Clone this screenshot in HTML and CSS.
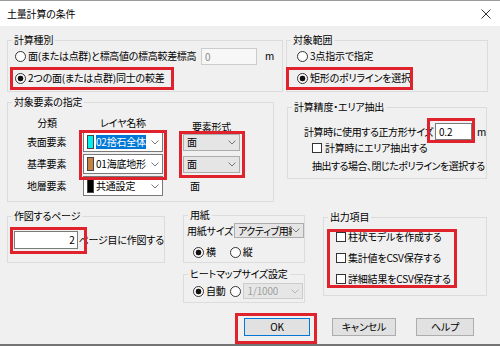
FILE: index.html
```html
<!DOCTYPE html>
<html lang="ja">
<head>
  <meta charset="UTF-8" />
  <title>土量計算の条件</title>
  <link rel="stylesheet" href="styles.css">
</head>
<body>
  <div class="dialog">
    <div class="titlebar">
      <span class="title">土量計算の条件</span>
      <svg class="close" width="10" height="10" viewBox="0 0 10 10"><path d="M0.5 0.5L9.5 9.5M9.5 0.5L0.5 9.5" stroke="#333" stroke-width="1"/></svg>
    </div>

    <div class="content">
      <div class="row row-top">
        <fieldset class="group grp-kind">
          <legend>計算種別</legend>
          <div class="group-body">
            <div class="line">
              <span class="radio"></span>
              <span class="kind-label">面(または点群)と標高値の標高較差標高</span>
              <span class="textbox disabled">0</span>
              <span class="unit">m</span>
            </div>
            <div class="line">
              <span class="radio on"></span>
              <span>2つの面(または点群)同士の較差</span>
            </div>
          </div>
        </fieldset>

        <fieldset class="group grp-range">
          <legend>対象範囲</legend>
          <div class="group-body">
            <div class="line"><span class="radio"></span><span>3点指示で指定</span></div>
            <div class="line"><span class="radio on"></span><span>矩形のポリラインを選択</span></div>
          </div>
        </fieldset>
      </div>

      <div class="row row-mid">
        <fieldset class="group grp-target">
          <legend>対象要素の指定</legend>
          <div class="group-body target-grid">
            <span class="hdr hdr-kind">分類</span>
            <span class="hdr hdr-layer">レイヤ名称</span>
            <span class="hdr hdr-form">要素形式</span>

            <span class="row-label">表面要素</span>
            <span class="combo edit">
              <span class="swatch" style="background:#00f0f0"></span>
              <span class="combo-text selected">02捨石全体</span>
              <svg class="chev" width="8" height="5" viewBox="0 0 8 5"><path d="M0.5 0.5L4 4L7.5 0.5" fill="none" stroke="#777"/></svg>
            </span>
            <span class="combo list">
              <span class="combo-text">面</span>
              <svg class="chev" width="8" height="5" viewBox="0 0 8 5"><path d="M0.5 0.5L4 4L7.5 0.5" fill="none" stroke="#777"/></svg>
            </span>

            <span class="row-label">基準要素</span>
            <span class="combo edit">
              <span class="swatch" style="background:#c8823f"></span>
              <span class="combo-text">01海底地形</span>
              <svg class="chev" width="8" height="5" viewBox="0 0 8 5"><path d="M0.5 0.5L4 4L7.5 0.5" fill="none" stroke="#777"/></svg>
            </span>
            <span class="combo list">
              <span class="combo-text">面</span>
              <svg class="chev" width="8" height="5" viewBox="0 0 8 5"><path d="M0.5 0.5L4 4L7.5 0.5" fill="none" stroke="#777"/></svg>
            </span>

            <span class="row-label">地層要素</span>
            <span class="combo edit">
              <span class="swatch" style="background:#000"></span>
              <span class="combo-text">共通設定</span>
              <svg class="chev" width="8" height="5" viewBox="0 0 8 5"><path d="M0.5 0.5L4 4L7.5 0.5" fill="none" stroke="#777"/></svg>
            </span>
            <span class="form-plain">面</span>
          </div>
        </fieldset>

        <fieldset class="group grp-accuracy">
          <legend>計算精度・エリア抽出</legend>
          <div class="group-body">
            <div class="line">
              <span class="size-label">計算時に使用する正方形サイズ</span>
              <span class="textbox size-box">0.2</span>
              <span class="unit-m">m</span>
            </div>
            <div class="line check-line">
              <span class="check"></span><span>計算時にエリア抽出する</span>
            </div>
            <div class="line note-line">抽出する場合、閉じたポリラインを選択する</div>
          </div>
        </fieldset>
      </div>

      <div class="row row-bottom">
        <fieldset class="group grp-page">
          <legend>作図するページ</legend>
          <div class="group-body line">
            <span class="textbox page-box">2</span>
            <span class="page-text">ページ目に作図する</span>
          </div>
        </fieldset>

        <div class="col-paper">
          <fieldset class="group grp-paper">
            <legend>用紙</legend>
            <div class="group-body">
              <div class="line">
                <span class="paper-label">用紙サイズ</span>
                <span class="combo list paper-combo">
                  <span class="combo-text">アクティブ用紙</span>
                  <svg class="chev" width="8" height="5" viewBox="0 0 8 5"><path d="M0.5 0.5L4 4L7.5 0.5" fill="none" stroke="#777"/></svg>
                </span>
              </div>
              <div class="line orient">
                <span class="radio on"></span><span>横</span>
                <span class="radio gap-radio"></span><span>縦</span>
              </div>
            </div>
          </fieldset>

          <fieldset class="group grp-heat">
            <legend>ヒートマップサイズ設定</legend>
            <div class="group-body line heat-line">
              <span class="radio on"></span><span>自動</span>
              <span class="radio heat-radio"></span>
              <span class="combo disabled-combo">
                <span class="combo-text">1/1000</span>
                <svg class="chev" width="8" height="5" viewBox="0 0 8 5"><path d="M0.5 0.5L4 4L7.5 0.5" fill="none" stroke="#b5b5b5"/></svg>
              </span>
            </div>
          </fieldset>
        </div>

        <fieldset class="group grp-output">
          <legend>出力項目</legend>
          <div class="group-body">
            <div class="line out-line"><span class="check"></span><span>柱状モデルを作成する</span></div>
            <div class="line out-line"><span class="check"></span><span>集計値をCSV保存する</span></div>
            <div class="line out-line"><span class="check"></span><span>詳細結果をCSV保存する</span></div>
          </div>
        </fieldset>
      </div>

      <div class="buttons">
        <span class="btn btn-ok">OK</span>
        <span class="btn btn-cancel">キャンセル</span>
        <span class="btn btn-help">ヘルプ</span>
      </div>
    </div>

    <!-- red highlight frames -->
    <div class="mark mark-kind"></div>
    <div class="mark mark-range"></div>
    <div class="mark mark-layer"></div>
    <div class="mark mark-form"></div>
    <div class="mark mark-size"></div>
    <div class="mark mark-page"></div>
    <div class="mark mark-output"></div>
    <div class="mark mark-ok"></div>
  </div>
</body>
</html>
```

FILE: styles.css
```css
* { box-sizing: border-box; }
body {
  margin: 0;
  font-family: "Noto Sans CJK JP", "Noto Sans", sans-serif;
  font-size: 10px; line-height: 14px;
  letter-spacing: -0.2px;
  font-feature-settings: "palt" 1;
  color: #000; background: #fff;
}
.dialog {
  position: relative;
  width: 500px; height: 346px;
  background: #f0f0f0;
  border-bottom: 2px solid #747474;
  overflow: hidden;
}
.titlebar {
  height: 26px; background: #fff;
  border-top: 1px solid #9a9a9a;
  display: flex; align-items: center; justify-content: space-between;
  padding: 0 9px 0 7px;
}
.content { padding: 8px 0 0 7px; }

/* group boxes */
.group {
  margin: 0; padding: 0; min-width: 0;
  border: 1px solid #dcdcdc;
}
.group legend {
  padding: 0 2px; margin-left: 4px;
  line-height: 12px;
}
.row { display: flex; align-items: flex-start; }
.line { display: flex; align-items: center; white-space: nowrap; }

.radio {
  flex: none; width: 11px; height: 11px;
  border: 1px solid #333; border-radius: 50%;
  background: #fff; margin-right: 2px;
}
.radio.on { background: radial-gradient(circle, #111 0 2.6px, #fff 3.2px); }
.check {
  flex: none; width: 10px; height: 10px;
  border: 1px solid #333; background: #fff;
  margin-right: 3px;
}
.textbox {
  display: block; background: #fff;
  border: 1px solid #7a7a7a;
  padding: 0 3px; line-height: 15px;
}
.textbox.disabled { background: #f7f7f7; border-color: #cccccc; color: #8a8a8a; }

.combo {
  display: flex; align-items: center;
  border: 1px solid #7a7a7a; background: #fff;
  overflow: hidden;
}
.combo .chev { flex: none; margin-left: auto; margin-right: 3px; }
.combo.list { background: #e5e5e5; border-color: #adadad; padding-left: 3px; }
.combo-text { overflow: hidden; white-space: nowrap; }

/* 計算種別 / 対象範囲 */
.row-top .group { height: 58px; }
.grp-kind { width: 276px; }
.grp-kind .group-body { padding: 1px 0 0 7px; }
.grp-kind .line { height: 18px; }
.grp-kind .line + .line, .grp-range .line + .line { margin-top: 4px; }
.kind-label { width: 173px; letter-spacing: -0.3px; }
.grp-kind .textbox { width: 56px; height: 17px; }
.unit { margin-left: 8px; }
.grp-range { width: 202px; margin-left: 3px; }
.grp-range .group-body { padding: 1px 0 0 10px; }
.grp-range .line { height: 18px; }

/* 対象要素の指定 */
.row-mid { margin-top: 4px; }
.grp-target { width: 267px; height: 106px; }
.target-grid {
  display: grid;
  grid-template-columns: 56px 100px 57px;
  grid-template-rows: 15px 20px 20px 20px;
  row-gap: 2px;
  padding: 7px 0 0 19px;
}
.hdr { text-align: center; line-height: 15px; }
.hdr-kind { width: 40px; }
.hdr-layer { width: 80px; }
.hdr-form { padding-top: 4px; align-self: start; }
.row-label { align-self: center; }
.combo.edit { width: 80px; height: 20px; padding-left: 3px; }
.swatch { flex: none; width: 7px; height: 14px; border: 1px solid #444; margin-right: 2px; }
.combo.edit .combo-text { width: 50px; line-height: 14px; }
.combo-text.selected { background: #0078d7; color: #fff; }
.combo.list:not(.paper-combo) { height: 17px; align-self: center; }
.form-plain { align-self: center; padding-left: 7px; }

/* 計算精度・エリア抽出 */
.grp-accuracy { width: 200px; height: 78px; margin: 5px 0 0 13px; }
.grp-accuracy .group-body { padding: 10px 0 0 16px; }
.size-label { width: 131px; overflow: hidden; letter-spacing: -0.4px; }
.size-box { width: 37px; height: 17px; }
.unit-m { margin-left: 5px; }
.check-line { height: 13px; margin-top: 1px; padding-left: 8px; }
.note-line { height: 14px; margin-top: 5px; padding-left: 8px; letter-spacing: -0.5px; }

/* lower groups */
.row-bottom { margin-top: 7px; }
.grp-page { width: 158px; height: 53px; margin-top: 1px; }
.grp-page .group-body { padding: 9px 0 0 6px; }
.page-box { width: 64px; height: 18px; text-align: right; padding-right: 2px; }
.page-text { margin-left: 1px; }

.col-paper { width: 122px; margin-left: 18px; display: flex; flex-direction: column; }
.grp-paper { height: 54px; }
.grp-paper .group-body { padding: 2px 0 0 3px; }
.paper-label { width: 47px; }
.paper-combo { width: 70px; height: 15px; }
.paper-combo .combo-text { width: 56px; letter-spacing: -0.4px; }
.orient { height: 14px; margin-top: 7px; padding-left: 6px; }
.gap-radio { margin-left: 14px; }
.grp-heat { height: 35px; margin-top: 5px; }
.heat-line { padding: 3px 0 0 9px; height: 19px; }
.heat-radio { margin-left: 4px; }
.disabled-combo {
  width: 60px; height: 16px; padding-left: 4px;
  background: #e6e6e6; border-color: #cccccc; color: #a0a0a0;
}

.grp-output { width: 164px; height: 85px; margin: 2px 0 0 18px; }
.grp-output .group-body { padding: 7px 0 0 12px; }
.out-line { height: 14px; }
.out-line + .out-line { margin-top: 7px; }
.out-line .check { margin-right: 2px; }

/* buttons */
.buttons {
  display: flex; justify-content: flex-end;
  margin-top: 15px; padding-right: 26px;
}
.btn {
  height: 18px; line-height: 16px; text-align: center;
  background: #e1e1e1; border: 1px solid #adadad;
}
.btn-ok { width: 66px; border-color: #0078d7; }
.btn-cancel { width: 64px; margin-left: 22px; }
.btn-help { width: 58px; margin-left: 20px; }

/* red highlight frames */
.mark { position: absolute; border: 3px solid #e0222c; }
.mark-kind { left: 10px; top: 67px; width: 164px; height: 23px; }
.mark-range { left: 286px; top: 67px; width: 127px; height: 23px; }
.mark-layer { left: 79px; top: 130px; width: 88px; height: 50px; }
.mark-form { left: 179px; top: 131px; width: 66px; height: 47px; }
.mark-size { left: 427px; top: 118px; width: 48px; height: 25px; }
.mark-page { left: 10px; top: 227px; width: 77px; height: 27px; }
.mark-output { left: 327px; top: 229px; width: 130px; height: 59px; }
.mark-ok { left: 235px; top: 313px; width: 82px; height: 31px; }
```
